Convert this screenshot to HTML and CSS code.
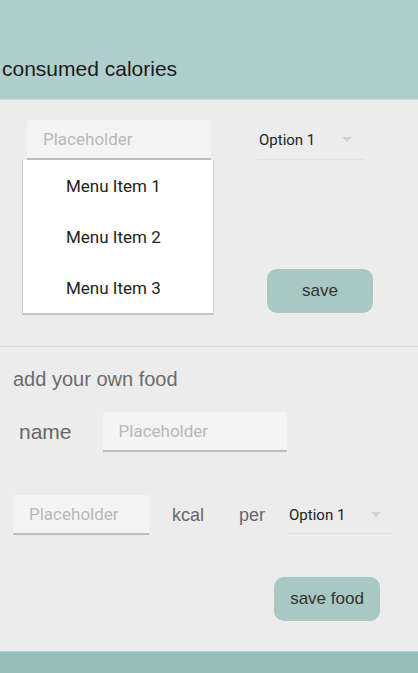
FILE: index.html
```html
<!DOCTYPE html>
<html lang="en">
  <head>
    <meta charset="UTF-8" />
    <meta name="viewport" content="width=device-width, initial-scale=1.0" />
    <title>Calories</title>
    <link rel="stylesheet" href="styles.css">
  </head>
  <body>
    <div class="app">
      <header class="top-bar">
        <h1>consumed calories</h1>
      </header>

      <!-- Consumed food -->
      <section class="consumed">
        <div class="consumed-row">
          <div class="field-wrap">
            <input class="text-field wide" type="text" placeholder="Placeholder" />
            <ul class="menu">
              <li>Menu Item 1</li>
              <li>Menu Item 2</li>
              <li>Menu Item 3</li>
            </ul>
          </div>
          <div class="select">
            <span>Option 1</span>
            <span class="arrow"></span>
          </div>
        </div>
        <div class="save-row">
          <button type="button" class="btn">save</button>
        </div>
      </section>

      <!-- Own food -->
      <section class="own-food">
        <h2>add your own food</h2>
        <div class="name-row">
          <label for="foodName">name</label>
          <input class="text-field wide" id="foodName" type="text" placeholder="Placeholder" />
        </div>
        <div class="kcal-row">
          <input class="text-field small" type="text" placeholder="Placeholder" />
          <span class="unit">kcal</span>
          <span class="unit per">per</span>
          <div class="select select-per">
            <span>Option 1</span>
            <span class="arrow"></span>
          </div>
        </div>
        <div class="save-food-row">
          <button type="button" class="btn">save food</button>
        </div>
      </section>

      <footer class="bottom-bar"></footer>
    </div>
  </body>
</html>
```

FILE: styles.css
```css
* {
  margin: 0;
  padding: 0;
  box-sizing: border-box;
}

body {
  background: #ececec;
  font-family: "Liberation Sans", Arial, sans-serif;
}

.app {
  display: flex;
  flex-direction: column;
  min-height: 100vh;
}

/* Header */
.top-bar {
  height: 100px;
  background: #aecfcd;
  border-bottom: 1px solid #c4dbd9;
  display: flex;
  align-items: flex-end;
  padding: 0 0 18px 2px;
}
.top-bar h1 {
  font-size: 21px;
  font-weight: normal;
  color: #1c1c1c;
  line-height: 24px;
}

/* Inputs */
.text-field {
  height: 40px;
  border: none;
  border-bottom: 2px solid #bdbdbd;
  border-radius: 2px 2px 0 0;
  background: #f4f4f4;
  padding: 0 16px;
  font-family: Roboto, sans-serif;
  font-size: 17px;
  color: #333;
  outline: none;
}
.text-field::placeholder {
  color: #b8b8b8;
}
.text-field.wide {
  width: 184px;
}
.text-field.small {
  width: 136px;
}

.select {
  width: 107px;
  height: 40px;
  display: flex;
  align-items: center;
  justify-content: space-between;
  padding: 0 12px 0 2px;
  border-bottom: 1px solid #e0e0e0;
  font-family: Roboto, sans-serif;
  font-size: 15px;
  color: #222;
}
.arrow {
  width: 0;
  height: 0;
  border-left: 5px solid transparent;
  border-right: 5px solid transparent;
  border-top: 5px solid #d0d0d0;
}

/* Buttons */
.btn {
  width: 106px;
  height: 44px;
  border: none;
  border-radius: 10px;
  background: #a9c7c3;
  color: #333;
  font-family: "Liberation Sans", Arial, sans-serif;
  font-size: 17px;
  cursor: pointer;
}

/* Consumed section */
.consumed {
  border-bottom: 1px solid #d6d6d6;
  padding-bottom: 33px;
}
.consumed-row {
  display: flex;
  gap: 46px;
  padding: 20px 0 0 27px;
}
.field-wrap {
  position: relative;
}
.menu {
  position: absolute;
  top: 40px;
  left: -5px;
  width: 192px;
  list-style: none;
  background: #fff;
  border: 1px solid #cdcdcd;
  border-top: none;
  border-bottom: 2px solid #c6c6c6;
  font-family: Roboto, sans-serif;
  font-size: 17px;
  color: #222;
  z-index: 2;
}
.menu li {
  height: 51px;
  line-height: 52px;
  padding-left: 43px;
}
.save-row {
  padding: 109px 0 0 267px;
}

/* Own food section */
.own-food {
  flex: 1;
  padding: 20px 0 0 0;
}
.own-food h2 {
  font-size: 20px;
  font-weight: normal;
  color: #6b6b6b;
  padding-left: 13px;
  line-height: 24px;
}
.name-row {
  display: flex;
  align-items: center;
  gap: 31px;
  padding: 21px 0 0 19px;
}
.name-row label {
  font-size: 21px;
  color: #666;
}
.kcal-row {
  display: flex;
  align-items: center;
  padding: 43px 0 0 13px;
}
.unit {
  font-size: 18px;
  color: #666;
  margin-left: 23px;
}
.unit.per {
  margin-left: 35px;
}
.select-per {
  margin-left: 23px;
  width: 105px;
  height: 38px;
  padding-left: 1px;
}
.save-food-row {
  padding: 42px 0 0 274px;
}

/* Footer */
.bottom-bar {
  height: 22px;
  background: #97bfbb;
  border-top: 1px solid #b6d0cd;
}
```
